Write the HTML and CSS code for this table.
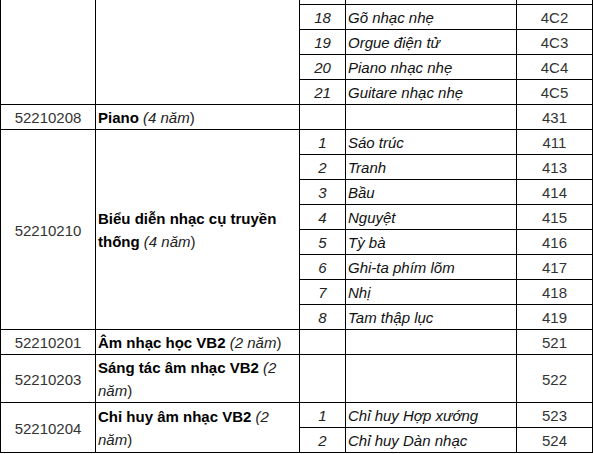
FILE: index.html
```html
<!DOCTYPE html>
<html lang="vi">
<head>
<meta charset="utf-8">
<title>Bảng ngành</title>
<link rel="stylesheet" href="styles.css">
</head>
<body>
<table class="grid">
  <colgroup>
    <col class="c-code"><col class="c-name"><col class="c-num"><col class="c-spec"><col class="c-code2">
  </colgroup>
  <tbody>
    <tr class="prev">
      <td class="code" rowspan="5"></td>
      <td class="name" rowspan="5"></td>
      <td class="num"></td><td class="spec"></td><td class="code2"></td>
    </tr>
    <tr><td class="num">18</td><td class="spec">Gõ nhạc nhẹ</td><td class="code2">4C2</td></tr>
    <tr><td class="num">19</td><td class="spec">Orgue điện tử</td><td class="code2">4C3</td></tr>
    <tr><td class="num">20</td><td class="spec">Piano nhạc nhẹ</td><td class="code2">4C4</td></tr>
    <tr><td class="num">21</td><td class="spec">Guitare nhạc nhẹ</td><td class="code2">4C5</td></tr>
    <tr>
      <td class="code">52210208</td>
      <td class="name"><strong>Piano</strong> <em>(4 năm</em>)</td>
      <td class="num"></td><td class="spec"></td><td class="code2">431</td>
    </tr>
    <tr>
      <td class="code" rowspan="8">52210210</td>
      <td class="name" rowspan="8"><strong>Biểu diễn nhạc cụ truyền thống</strong> <em>(4 năm</em>)</td>
      <td class="num">1</td><td class="spec">Sáo trúc</td><td class="code2">411</td>
    </tr>
    <tr><td class="num">2</td><td class="spec">Tranh</td><td class="code2">413</td></tr>
    <tr><td class="num">3</td><td class="spec">Bầu</td><td class="code2">414</td></tr>
    <tr><td class="num">4</td><td class="spec">Nguyệt</td><td class="code2">415</td></tr>
    <tr><td class="num">5</td><td class="spec">Tỳ bà</td><td class="code2">416</td></tr>
    <tr><td class="num">6</td><td class="spec">Ghi-ta phím lõm</td><td class="code2">417</td></tr>
    <tr><td class="num">7</td><td class="spec">Nhị</td><td class="code2">418</td></tr>
    <tr><td class="num">8</td><td class="spec">Tam thập lục</td><td class="code2">419</td></tr>
    <tr>
      <td class="code">52210201</td>
      <td class="name"><strong>Âm nhạc học VB2</strong> <em>(2 năm</em>)</td>
      <td class="num"></td><td class="spec"></td><td class="code2">521</td>
    </tr>
    <tr>
      <td class="code">52210203</td>
      <td class="name"><strong>Sáng tác âm nhạc VB2</strong> <em>(2 năm</em>)</td>
      <td class="num"></td><td class="spec"></td><td class="code2">522</td>
    </tr>
    <tr>
      <td class="code" rowspan="2">52210204</td>
      <td class="name" rowspan="2"><strong>Chỉ huy âm nhạc VB2</strong> <em>(2 năm</em>)</td>
      <td class="num">1</td><td class="spec">Chỉ huy Hợp xướng</td><td class="code2">523</td>
    </tr>
    <tr><td class="num">2</td><td class="spec">Chỉ huy Dàn nhạc</td><td class="code2">524</td></tr>
  </tbody>
</table>
</body>
</html>
```

FILE: styles.css
```css
html, body {
  margin: 0;
  padding: 0;
  background: #fff;
  overflow: hidden;
}

body {
  font-family: "Liberation Sans", Arial, sans-serif;
  font-size: 15px;
  color: #333;
}

.grid {
  border-collapse: collapse;
  table-layout: fixed;
  width: 592px;
  margin-top: -21px;
}

.c-code { width: 95px; }
.c-name { width: 204px; }
.c-num { width: 46px; }
.c-spec { width: 171px; }
.c-code2 { width: 76px; }

.grid td {
  border: 1px solid #000;
  padding: 1px 2px 0;
  line-height: 23px;
  height: 23px;
  vertical-align: middle;
}

.code, .code2 {
  text-align: center;
  color: #333;
}

.name {
  color: #222;
}

.name strong {
  color: #000;
  font-weight: bold;
}

.name em {
  font-style: italic;
}

.num {
  text-align: center;
  font-style: italic;
  color: #222;
}

.spec {
  font-style: italic;
  color: #111;
}
```
